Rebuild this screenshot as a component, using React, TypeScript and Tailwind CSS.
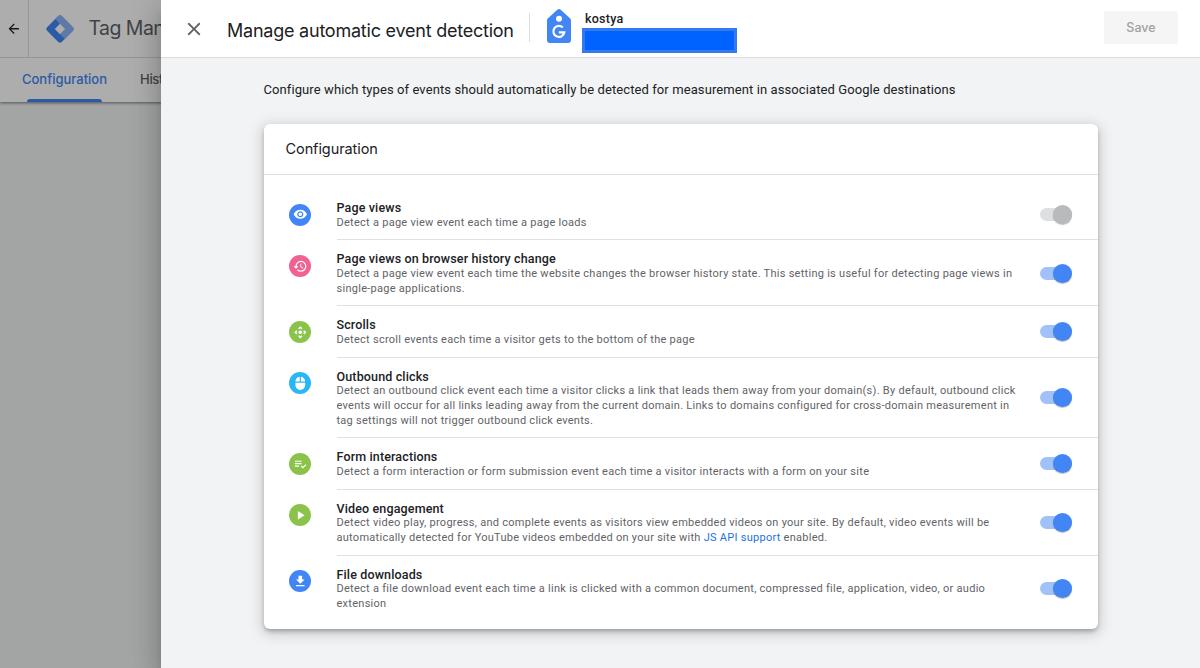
import type { IconType } from "react-icons";
import {
  MdArrowBack,
  MdClose,
  MdControlCamera,
  MdGetApp,
  MdHistory,
  MdMouse,
  MdPlayArrow,
  MdPlaylistAddCheck,
  MdVisibility,
} from "react-icons/md";
import clsx from "clsx";
import type { ReactNode } from "react";

type EventSetting = {
  title: string;
  lines: ReactNode[];
  icon: IconType;
  color: string;
  locked?: boolean;
};

const settings: EventSetting[] = [
  {
    title: "Page views",
    lines: ["Detect a page view event each time a page loads"],
    icon: MdVisibility,
    color: "bg-[#4285f4]",
    locked: true,
  },
  {
    title: "Page views on browser history change",
    lines: [
      "Detect a page view event each time the website changes the browser history state. This setting is useful for detecting page views in",
      "single-page applications.",
    ],
    icon: MdHistory,
    color: "bg-[#f06292]",
  },
  {
    title: "Scrolls",
    lines: ["Detect scroll events each time a visitor gets to the bottom of the page"],
    icon: MdControlCamera,
    color: "bg-[#8bc34a]",
  },
  {
    title: "Outbound clicks",
    lines: [
      "Detect an outbound click event each time a visitor clicks a link that leads them away from your domain(s). By default, outbound click",
      "events will occur for all links leading away from the current domain. Links to domains configured for cross-domain measurement in",
      "tag settings will not trigger outbound click events.",
    ],
    icon: MdMouse,
    color: "bg-[#29b6f6]",
  },
  {
    title: "Form interactions",
    lines: ["Detect a form interaction or form submission event each time a visitor interacts with a form on your site"],
    icon: MdPlaylistAddCheck,
    color: "bg-[#8bc34a]",
  },
  {
    title: "Video engagement",
    lines: [
      "Detect video play, progress, and complete events as visitors view embedded videos on your site. By default, video events will be",
      <>
        automatically detected for YouTube videos embedded on your site with{" "}
        <a href="#" className="text-[#1a73e8]">JS API support</a> enabled.
      </>,
    ],
    icon: MdPlayArrow,
    color: "bg-[#8bc34a]",
  },
  {
    title: "File downloads",
    lines: [
      "Detect a file download event each time a link is clicked with a common document, compressed file, application, video, or audio",
      "extension",
    ],
    icon: MdGetApp,
    color: "bg-[#4285f4]",
  },
];

function Toggle({ locked }: { locked?: boolean }) {
  return (
    <button
      role="switch"
      aria-checked="true"
      disabled={locked}
      className={clsx(
        "flex h-[13px] w-8 shrink-0 items-center justify-end rounded-full",
        locked ? "bg-[#dedfe0]" : "bg-[#a0c2f9]"
      )}
    >
      <span
        className={clsx(
          "size-[19px] shrink-0 rounded-full shadow-[0_1px_1px_rgba(0,0,0,0.25)]",
          locked ? "bg-[#b9babb]" : "bg-[#4285f4]"
        )}
      />
    </button>
  );
}

function SettingRow({ setting, last }: { setting: EventSetting; last: boolean }) {
  const Icon = setting.icon;
  return (
    <div className="flex pl-[25.5px]">
      <div className={clsx("mt-[14.65px] flex size-[22px] shrink-0 items-center justify-center rounded-full text-white", setting.color)}>
        <Icon size={14.6} />
      </div>
      <div
        className={clsx(
          "ml-[25.5px] flex flex-1 items-center justify-between pt-[12px] pr-[25.5px]",
          last ? "pb-[10px]" : "border-b border-[#dfe0e2] pb-[9px]"
        )}
      >
        <div className="whitespace-nowrap">
          <h3 className="text-[12.5px] leading-[14.65px] font-medium tracking-[0.14px] text-[#202124]">{setting.title}</h3>
          <div className="text-[11px] leading-[14.65px] tracking-[0.27px] text-[#5f6368]">
            {setting.lines.map((line, i) => (
              <p key={i}>{line}</p>
            ))}
          </div>
        </div>
        <div className="-mt-[2.5px]">
          <Toggle locked={setting.locked} />
        </div>
      </div>
    </div>
  );
}

function TagManagerLogo() {
  return (
    <svg width="28" height="28" viewBox="0 0 28 28">
      <path d="M12 1.300a2.800 2.800 0 0 1 4 0L26.700 12a2.800 2.800 0 0 1 0 4L16 26.700a2.800 2.800 0 0 1-4 0L1.300 16a2.800 2.800 0 0 1 0-4Z" fill="#4285f4" />
      <path d="M9.500 4.200 12 1.300a2.800 2.800 0 0 1 4 0L26.700 12a2.800 2.800 0 0 1 0 4L18.800 23.900 14 19 19 14 14 9Z" fill="#8ab4f8" />
      <path d="m14 8.800 5.200 5.200-5.200 5.200L8.800 14Z" fill="#fff" />
    </svg>
  );
}

function GoogleTagIcon() {
  return (
    <svg width="24" height="34" viewBox="0 0 24 34">
      <path d="M10.300.8a2.600 2.600 0 0 1 3.400 0l9 8.200c.8.700 1.300 1.500 1.300 2.600V31a3 3 0 0 1-3 3H3a3 3 0 0 1-3-3V11.600C0 10.500.5 9.700 1.300 9Z" fill="#4285f4" />
      <circle cx="12" cy="9.700" r="3" fill="#fff" />
      <path d="M15.800 18.600a5.500 5.500 0 1 0 1.500 4.700H11.800" fill="none" stroke="#fff" strokeWidth="2.200" />
    </svg>
  );
}

function BackgroundPage() {
  return (
    <div className="h-full bg-[#f1f3f4] font-['Inter',sans-serif]">
      <div className="relative h-[102px] bg-white shadow-[0_1px_3px_rgba(0,0,0,0.5)]">
        <div className="flex h-[58px] items-center border-b border-[#dadce0]">
          <div className="flex h-full w-[29px] items-center justify-center border-r border-[#dadce0] pt-px text-[#202124]">
            <MdArrowBack size={15.5} />
          </div>
          <div className="ml-[16.500px]">
            <TagManagerLogo />
          </div>
          <span className="ml-[15px] pt-px text-[19.500px] tracking-[-0.550px] whitespace-nowrap text-[#5f6368]">Tag Manager</span>
        </div>
        <div className="flex h-11 text-[13px] font-medium">
          <div className="ml-[22px] flex w-[85px] flex-col items-center justify-between pt-[12px] text-[#4285f4]">
            <span className="leading-[19px]">Configuration</span>
            <span className="h-[3px] w-[75px] rounded-t-[3px] bg-[#4285f4]" />
          </div>
          <span className="ml-[33px] pt-[12px] leading-[19px] tracking-[-0.300px] text-[#5f6368]">History</span>
        </div>
      </div>
    </div>
  );
}

export default function App() {
  return (
    <div className="relative h-[668px] w-[1200px] overflow-hidden font-['Roboto',sans-serif]">
      <div className="absolute inset-0">
        <BackgroundPage />
      </div>
      <div className="absolute inset-0 bg-black/32" />

      <div className="absolute inset-y-0 right-0 flex w-[1039px] flex-col bg-[#f1f3f4] shadow-[0_8px_10px_-5px_rgba(0,0,0,0.2),0_16px_24px_2px_rgba(0,0,0,0.14),0_6px_30px_5px_rgba(0,0,0,0.12)]">
        <header className="flex h-[58px] shrink-0 items-center border-b border-[#dadce0] bg-white pr-[22px]">
          <button className="ml-[22px] text-[#5f6368]">
            <MdClose size={22} />
          </button>
          <h1 className="ml-[22px] w-[302px] pt-[3px] text-[18px] tracking-[-0.230px] whitespace-nowrap text-[#202124] font-['Inter',sans-serif]">
            Manage automatic event detection
          </h1>
          <div className="mb-0.5 h-[29px] w-px bg-[#dadce0]" />
          <div className="ml-[17px] mb-1.5">
            <GoogleTagIcon />
          </div>
          <div className="ml-[11px] h-[47px] pt-[5px]">
            <p className="pl-[3px] text-[12.500px] leading-[18px] font-medium tracking-[0.250px] text-[#202124]">kostya</p>
            <div className="h-[25px] w-[155px] border-[3px] border-[#3579ec] bg-[#0062ff]" />
          </div>
          <button disabled className="mb-0.5 ml-auto h-[33px] w-[74px] rounded-[3px] bg-[#f5f5f5] pt-px text-[12.500px] font-medium text-[#a0a1a2] font-['Inter',sans-serif]">
            Save
          </button>
        </header>

        <main className="pl-[102.500px]">
          <p className="pt-[22px] text-[13px] leading-5 tracking-[0.095px] whitespace-nowrap text-[#202124]">
            Configure which types of events should automatically be detected for measurement in associated Google destinations
          </p>
          <section className="mt-[23.500px] w-[834px] rounded-md bg-white pb-[7.300px] shadow-[0_3px_5px_-1px_rgba(0,0,0,0.3),0_3px_14px_3px_rgba(0,0,0,0.14)]">
            <h2 className="mb-[14.600px] h-[51px] border-b border-[#dfe0e2] pl-[22px] text-[14.500px] leading-[49px] tracking-[-0.080px] text-[#202124] font-['Inter',sans-serif]">
              Configuration
            </h2>
            {settings.map((setting, i) => (
              <SettingRow key={setting.title} setting={setting} last={i === settings.length - 1} />
            ))}
          </section>
        </main>
      </div>
    </div>
  );
}
